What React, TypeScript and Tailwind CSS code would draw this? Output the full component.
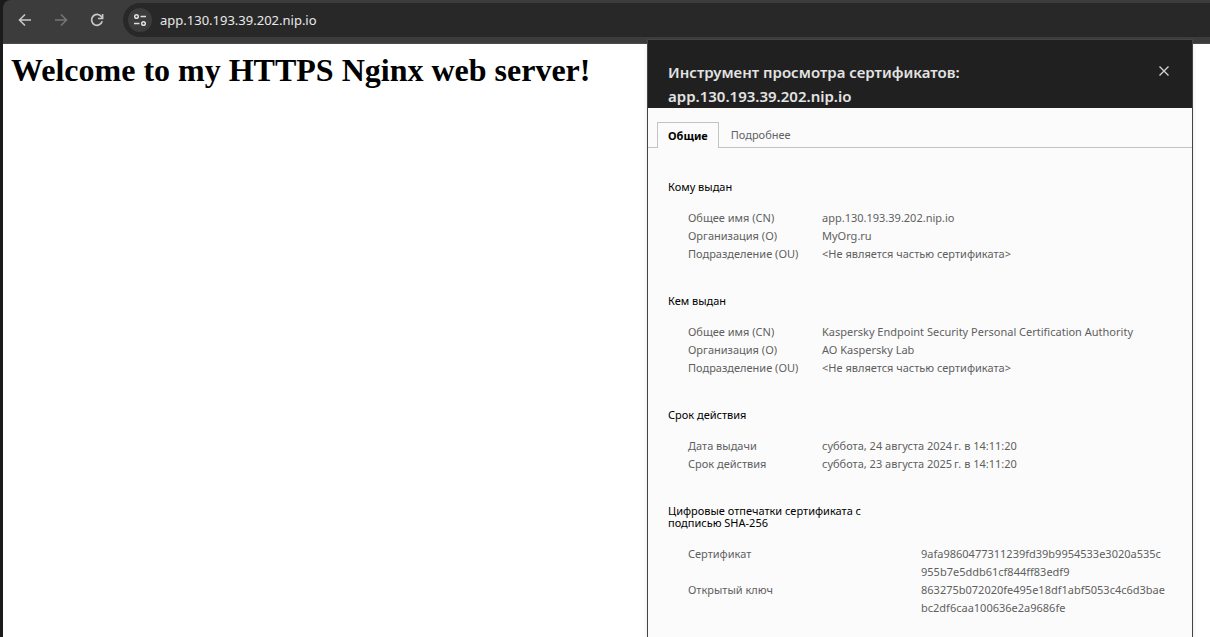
import React from "react";

type Row = { label: string; value: string[] };
type Section = { title: string; rows: Row[]; wide?: boolean };

const missing = "<Не является частью сертификата>";

const sections: Section[] = [
  {
    title: "Кому выдан",
    rows: [
      { label: "Общее имя (CN)", value: ["app.130.193.39.202.nip.io"] },
      { label: "Организация (O)", value: ["MyOrg.ru"] },
      { label: "Подразделение (OU)", value: [missing] },
    ],
  },
  {
    title: "Кем выдан",
    rows: [
      { label: "Общее имя (CN)", value: ["Kaspersky Endpoint Security Personal Certification Authority"] },
      { label: "Организация (O)", value: ["AO Kaspersky Lab"] },
      { label: "Подразделение (OU)", value: [missing] },
    ],
  },
  {
    title: "Срок действия",
    rows: [
      { label: "Дата выдачи", value: ["суббота, 24 августа 2024\u202fг. в 14:11:20"] },
      { label: "Срок действия", value: ["суббота, 23 августа 2025\u202fг. в 14:11:20"] },
    ],
  },
  {
    title: "Цифровые отпечатки сертификата с подписью SHA-256",
    wide: true,
    rows: [
      { label: "Сертификат", value: ["9afa9860477311239fd39b9954533e3020a535c", "955b7e5ddb61cf844ff83edf9"] },
      { label: "Открытый ключ", value: ["863275b072020fe495e18df1abf5053c4c6d3bae", "bc2df6caa100636e2a9686fe"] },
    ],
  },
];

function Toolbar() {
  return (
    <header className="flex h-11 items-start rounded-tl-lg border-b border-[#4a4a4a] bg-[#3c3c3c] pt-[3px] font-['Noto_Sans','Open_Sans',sans-serif]">
      <nav className="flex h-[34px] items-center gap-4 pl-3 pr-4" aria-label="Навигация">
        <button aria-label="Назад" className="flex size-5 items-center justify-center text-[#c7c7c7]">
          <svg width="14" height="14" viewBox="0 0 14 14" fill="none" stroke="currentColor" strokeWidth="1.6">
            <path d="M13 7H2M7 1.5 1.5 7 7 12.500" />
          </svg>
        </button>
        <button aria-label="Вперёд" disabled className="flex size-5 items-center justify-center text-[#757575]">
          <svg width="14" height="14" viewBox="0 0 14 14" fill="none" stroke="currentColor" strokeWidth="1.6">
            <path d="M1 7h11M7 1.500 12.500 7 7 12.500" />
          </svg>
        </button>
        <button aria-label="Обновить" className="flex size-5 items-center justify-center text-[#c7c7c7]">
          <svg width="14" height="14" viewBox="0 0 14 14" fill="none" stroke="currentColor" strokeWidth="1.7">
            <path d="M12.200 8.300A5.400 5.400 0 1 1 11.300 3.600L12.600 5" />
            <path d="M12.600 1v4.500H8" />
          </svg>
        </button>
      </nav>
      <div className="flex h-[34px] min-w-0 grow items-center gap-2 rounded-l-full bg-[#282828] pl-[5px]">
        <button aria-label="Сведения о сайте" className="flex size-6 shrink-0 items-center justify-center rounded-full bg-[#3c3c3c] text-[#dedede]">
          <svg width="14" height="14" viewBox="0 0 14 14" fill="none" stroke="currentColor" strokeWidth="1.5">
            <circle cx="3.500" cy="3.500" r="1.800" />
            <path d="M7.500 3.500H13M1 10.500h5.500" />
            <circle cx="10.500" cy="10.500" r="1.800" />
          </svg>
        </button>
        <input
          aria-label="Адресная строка"
          defaultValue="app.130.193.39.202.nip.io"
          className="min-w-0 grow bg-transparent text-[13px] leading-5 text-[#e8e8e8] outline-none"
        />
      </div>
    </header>
  );
}

function CertificateSection({ title, rows, wide }: Section) {
  return (
    <section>
      <h3 className="w-[45%] text-[11px] leading-3 text-black">{title}</h3>
      <dl className="mt-4 pl-5 text-[11px] leading-[18px] text-[#5f5f5f]">
        {rows.map((row) => (
          <div key={row.label} className="flex">
            <dt className={wide ? "w-[233px] shrink-0" : "w-[134px] shrink-0"}>{row.label}</dt>
            <dd className="whitespace-nowrap">
              {row.value.map((line) => (
                <span key={line} className="block">{line}</span>
              ))}
            </dd>
          </div>
        ))}
      </dl>
    </section>
  );
}

function CertificateDialog() {
  return (
    <div
      role="dialog"
      aria-labelledby="dialog-title"
      className="absolute top-[39px] right-[17px] bottom-0 flex w-[546px] flex-col overflow-hidden border border-b-0 border-[#454545] bg-[#fbfbfb] font-['Noto_Sans','Open_Sans',sans-serif] shadow-md"
    >
      <div className="flex h-[68px] shrink-0 items-start justify-between bg-[#202020] pt-5 pr-5 pl-5">
        <h2 id="dialog-title" className="text-[15px] leading-6 font-semibold text-[#e3e3e3]">
          Инструмент просмотра сертификатов:
          <br />
          app.130.193.39.202.nip.io
        </h2>
        <button aria-label="Закрыть" className="flex h-[22px] w-4 items-center justify-center text-[#d0d0d0]">
          <svg width="10" height="10" viewBox="0 0 10 10" stroke="currentColor" strokeWidth="1.400">
            <path d="m.5.5 9 9m0-9-9 9" />
          </svg>
        </button>
      </div>
      <div role="tablist" className="mt-3.5 flex shrink-0 items-end border-b border-[#c3c3c3] pl-[9px] text-[11px] leading-6">
        <button role="tab" aria-selected="true" className="-mb-px border border-b-0 border-[#c3c3c3] bg-[#fbfbfb] px-2.5 pt-px font-bold text-black">
          Общие
        </button>
        <button role="tab" aria-selected="false" className="px-3 text-[#5f6368]">
          Подробнее
        </button>
      </div>
      <div role="tabpanel" className="flex flex-col gap-8 px-5 pt-[33px]">
        {sections.map((section) => (
          <CertificateSection key={section.title} {...section} />
        ))}
      </div>
    </div>
  );
}

export default function App() {
  return (
    <div className="relative flex h-screen flex-col overflow-hidden bg-[#1b1b1b] pl-[3px]">
      <Toolbar />
      <main className="grow bg-white px-2 pt-2">
        <h1 className="font-['Liberation_Serif',serif] text-[32px] leading-[37px] font-bold text-black">
          Welcome to my HTTPS Nginx web server!
        </h1>
      </main>
      <CertificateDialog />
    </div>
  );
}
